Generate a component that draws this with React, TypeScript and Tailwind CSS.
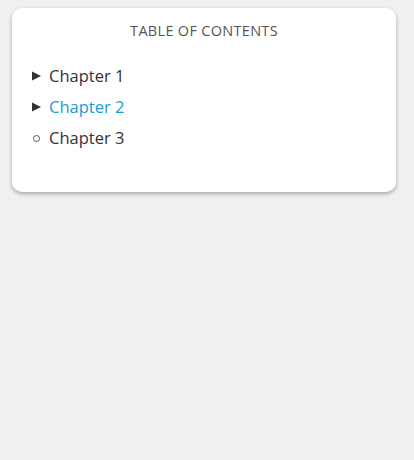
import React from "react";

type Chapter = { title: string; active?: boolean; leaf?: boolean };

const chapters: Chapter[] = [
  { title: "Chapter 1" },
  { title: "Chapter 2", active: true },
  { title: "Chapter 3", leaf: true },
];

function Marker({ leaf }: { leaf?: boolean }) {
  if (leaf) {
    return (
      <svg width="9" height="9" viewBox="0 0 9 9" className="shrink-0">
        <circle cx="4.5" cy="4.5" r="3" fill="none" stroke="#555" strokeWidth="1" />
      </svg>
    );
  }
  return (
    <svg width="9" height="10" viewBox="0 0 9 10" className="shrink-0">
      <path d="M0 0.5 L9 5 L0 9.5 Z" fill="#333" />
    </svg>
  );
}

export default function App() {
  return (
    <div className="min-h-[460px] bg-[#f0f0f0] px-3 pt-2 font-['Open_Sans',sans-serif]">
      <div className="h-[184px] w-[384px] rounded-[10px] bg-white shadow-[0_2px_4px_rgba(0,0,0,0.3)]">
        <h2 className="pt-[13px] text-center text-[14.5px] leading-[20px] tracking-[0.3px] text-[#555]">
          TABLE OF CONTENTS
        </h2>
        <ul className="mt-[23px] flex flex-col gap-[7px] pl-5">
          {chapters.map((c) => (
            <li key={c.title} className="flex h-[24px] items-center gap-2">
              <Marker leaf={c.leaf} />
              <span className={`text-[16.5px] font-medium leading-[24px] ${c.active ? "text-[#1a9ad6]" : "text-[#333]"}`}>
                {c.title}
              </span>
            </li>
          ))}
        </ul>
      </div>
    </div>
  );
}
